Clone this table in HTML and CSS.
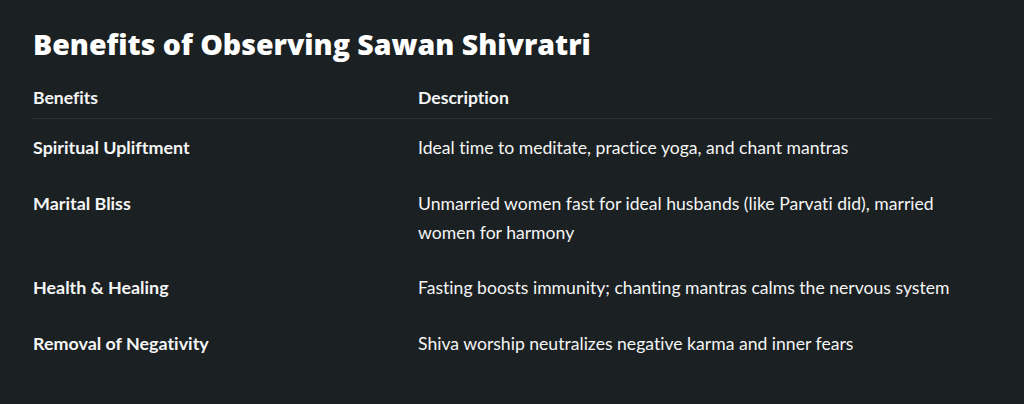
FILE: index.html
```html
<!DOCTYPE html>
<html lang="en">
<head>
<meta charset="utf-8">
<title>Benefits of Observing Sawan Shivratri</title>
<link rel="stylesheet" href="styles.css">
</head>
<body>
<main class="page">
  <h2 class="title">Benefits of Observing Sawan Shivratri</h2>
  <table class="benefits">
    <thead>
      <tr>
        <th class="col-benefit">Benefits</th>
        <th class="col-desc">Description</th>
      </tr>
    </thead>
    <tbody>
      <tr>
        <td class="benefit">Spiritual Upliftment</td>
        <td class="desc">Ideal time to meditate, practice yoga, and chant mantras</td>
      </tr>
      <tr>
        <td class="benefit">Marital Bliss</td>
        <td class="desc">Unmarried women fast for ideal husbands (like Parvati did), married women for harmony</td>
      </tr>
      <tr>
        <td class="benefit">Health &amp; Healing</td>
        <td class="desc">Fasting boosts immunity; chanting mantras calms the nervous system</td>
      </tr>
      <tr>
        <td class="benefit">Removal of Negativity</td>
        <td class="desc">Shiva worship neutralizes negative karma and inner fears</td>
      </tr>
    </tbody>
  </table>
</main>
</body>
</html>
```
FILE: styles.css
```css
html, body {
  margin: 0;
  padding: 0;
}
body {
  background: #1b2022;
  color: #f4f5f5;
  font-family: Lato, "Open Sans", "Liberation Sans", sans-serif;
  font-size: 17.6px;
  font-variant-ligatures: none;
}
.page {
  padding: 26px 31px 20px 33px;
}
.title {
  margin: 0 0 15px 0;
  font-family: "Open Sans", Lato, "Liberation Sans", sans-serif;
  font-size: 28.5px;
  font-weight: 800;
  line-height: 36px;
  color: #ffffff;
}
.benefits {
  width: 960px;
  border-collapse: collapse;
  table-layout: fixed;
}
.col-benefit {
  width: 385px;
}
.benefits th {
  text-align: left;
  font-weight: 700;
  padding: 6px 0 6px 0;
  line-height: 29px;
  border-bottom: 1px solid #2c3336;
}
.benefits td {
  vertical-align: top;
  padding: 14px 0 12.5px 0;
  line-height: 29px;
}
.benefit {
  font-weight: 700;
  font-size: 17.9px;
  padding-right: 16px;
}
.desc {
  font-weight: 400;
}
```
